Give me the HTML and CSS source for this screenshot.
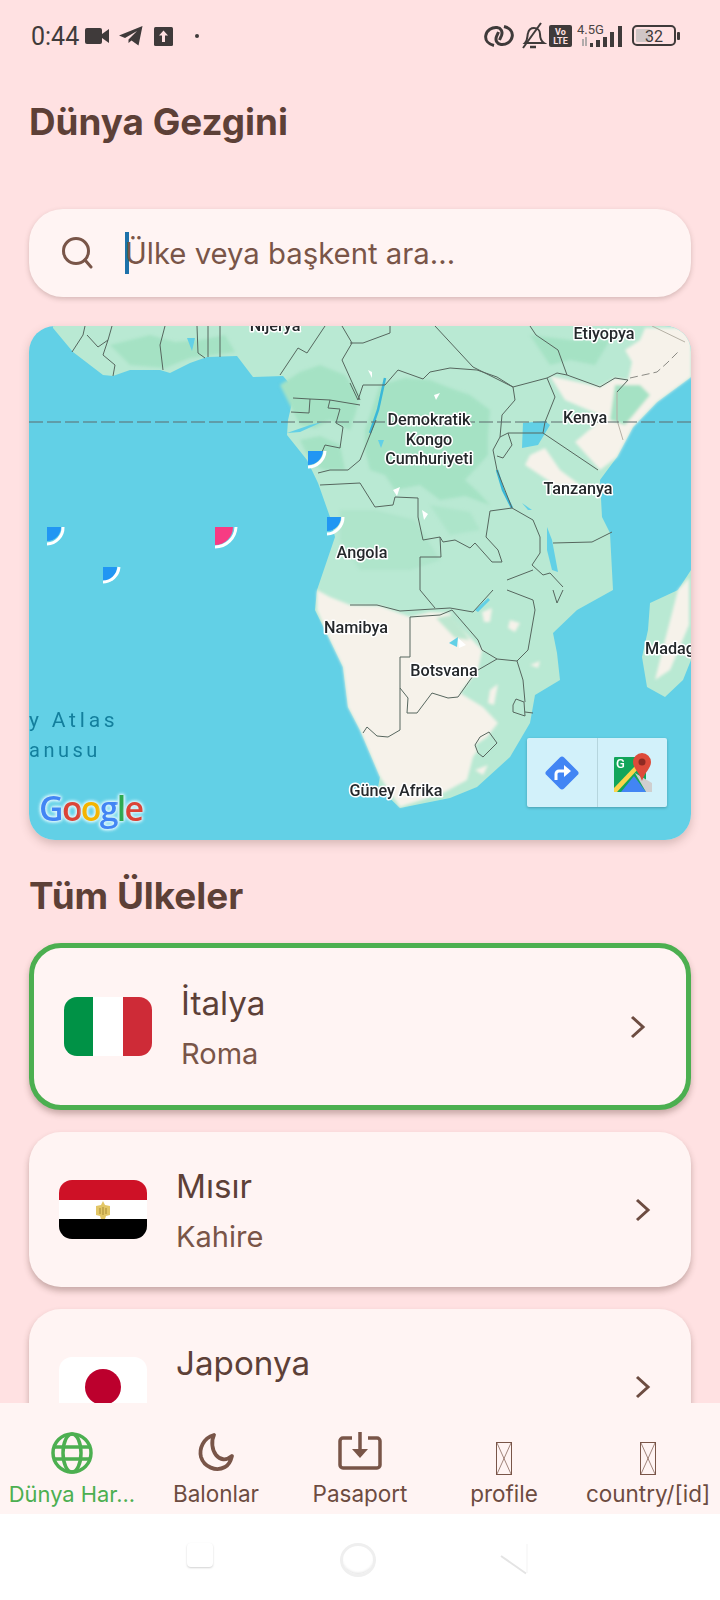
FILE: index.html
```html
<!DOCTYPE html>
<html lang="en">
  <head>
    <meta charset="UTF-8" />
    <meta name="viewport" content="width=device-width, initial-scale=1.0" />
    <title>Dünya Gezgini</title>
    <link rel="stylesheet" href="styles.css">
  </head>
  <body>
    <div class="status-bar">
      <div class="status-left">
        <span class="clock">0:44</span>
        <svg class="ico-video" width="24" height="16" viewBox="0 0 24 16"><rect x="0" y="0" width="17" height="16" rx="2"/><path d="M17 6l7-5v14l-7-5z"/></svg>
        <svg class="ico-send" width="24" height="20" viewBox="0 0 24 20"><path d="M23.5 0L0 9.5l6 2.5L18 5 9.5 13.5V17l3-2.5 7 5z"/></svg>
        <svg class="ico-up" width="19" height="19" viewBox="0 0 19 19"><rect width="19" height="19" rx="1.5"/><path d="M9.5 3.5l4.5 5h-3v6.500h-3v-6.500h-3z" fill="#ffe1e2"/></svg>
        <span class="status-dot"></span>
      </div>
      <div class="status-right">
        <svg class="ico-link" width="30" height="24" viewBox="0 0 30 24" fill="none" stroke="#3f3a3a" stroke-width="3"><path d="M10 21.500C4 20 1 16 1.800 11.500 2.800 6 8 3 13 3.500c4 .5 6 4 4.500 8l-2 4.500"/><path d="M20 2.500c6 1.500 9 5.500 8.200 10C27.200 18 22 21 17 20.500c-4-.5-6-4-4.500-8l2-4.500"/></svg>
        <svg class="ico-bell" width="28" height="28" viewBox="0 0 28 28" fill="none" stroke="#3f3a3a" stroke-width="2"><path d="M6 21c3-3 2-7 3-10 1-4 4-5 6-5 3 0 6 2 6 6 0 4 1 7 4 9z"/><path d="M4 26L22 1"/><path d="M11 25h6" stroke-width="2.500"/></svg>
        <svg class="ico-volte" width="23" height="22" viewBox="0 0 23 22"><rect width="23" height="22" rx="2"/><text x="11.500" y="10" class="volte-txt">Vo</text><text x="11.500" y="19" class="volte-txt">LTE</text></svg>
        <svg class="ico-signal" width="48" height="26" viewBox="0 0 48 26">
          <text x="0" y="11" class="net-txt">4.5G</text>
          <path d="M6 16v7M9 14v9" stroke="#999" stroke-width="1.500"/>
          <rect x="13" y="20" width="3" height="4"/><rect x="19" y="17" width="4" height="7"/><rect x="26" y="14" width="4" height="10"/><rect x="33" y="9" width="4" height="15"/><rect x="41" y="3" width="4" height="21"/>
        </svg>
        <svg class="ico-batt" width="48" height="22" viewBox="0 0 48 22"><rect x="1" y="1" width="42" height="19" rx="4" fill="none" stroke="#3f3a3a" stroke-width="2"/><rect x="4" y="4" width="14" height="13" rx="1" fill="#cfc6c6"/><rect x="45" y="7" width="3" height="8" rx="1"/><text x="13" y="16.500" class="batt-txt">32</text></svg>
      </div>
    </div>

    <main class="content">
      <h1 class="title">Dünya Gezgini</h1>

      <div class="search">
        <svg class="search-icon" width="34" height="32" viewBox="0 0 34 32" fill="none" stroke="#795548" stroke-width="3"><circle cx="16" cy="14" r="12.500"/><path d="M25 23l6 7" stroke-linecap="round"/></svg>
        <span class="caret"></span>
        <span class="search-text">Ülke veya başkent ara...</span>
      </div>

      <div class="map">
        <svg class="map-svg" width="662" height="514" viewBox="29 326 662 514">
          <defs>
            <filter id="soft" x="-5%" y="-5%" width="110%" height="110%"><feGaussianBlur stdDeviation="1.600"/></filter>
          </defs>
          <rect x="29" y="326" width="662" height="514" fill="#62d0e6"/>
          <!-- land -->
          <polygon class="land" points="53,326 53,328 73,352 103,375 113,376 130,370 160,370 170,373 190,363 207,357 237,356 253,377 283,376 295,390 288,420 287,435 307,460 318,483 330,517 335,537 317,590 315,610 330,640 343,667 348,707 360,730 380,777 378,787 400,808 450,798 477,787 510,757 530,723 535,695 560,680 557,653 553,633 577,610 613,590 610,533 602,517 600,480 617,457 633,427 657,402 691,377 691,326"/>
          <polygon class="land" points="691,570 678,590 650,603 648,630 642,657 647,687 665,697 683,680 691,660"/>
          <g filter="url(#soft)">
            <!-- forest patches -->
            <polygon class="forest" points="280,385 300,372 320,365 345,375 352,385 360,395 356,412 350,430 330,420 315,428 300,425"/>
            <polygon class="forest" points="380,385 405,378 430,380 450,388 470,395 490,410 488,435 488,455 465,480 478,492 490,505 465,496 440,500 420,485 395,490 385,475 370,470 365,450 365,430"/>
            <polygon class="forest" points="110,345 130,340 150,335 175,342 200,340 225,335 235,352 190,358 165,368 130,365"/>
            <polygon class="forest" points="300,440 320,436 340,445 345,470 325,470 312,465"/>
            <polygon class="forest" points="530,335 570,340 610,340 595,365 570,360 550,365"/>
            <polygon class="forest" opacity="0.5" points="340,510 375,510 415,520 440,560 410,570 360,570 340,540"/>
            <polygon class="forest" opacity="0.6" points="430,505 470,512 480,530 450,535"/>
            <!-- dry land -->
            <polygon class="dry" points="317,590 330,597 350,605 380,606 410,617 430,612 450,613 463,630 482,650 478,670 460,693 483,707 498,723 490,733 473,757 467,780 443,793 400,807 380,777 360,730 348,707 343,667 330,640 317,610"/>
            <polygon class="dry" points="550,376 600,387 615,378 628,380 632,362 625,350 640,340 645,328 691,328 691,377 657,402 633,427 617,457 600,470 575,442 595,425 600,415 565,400"/>
            <polygon class="dry" points="530,455 545,448 560,470 580,485 555,485 525,465"/>
            <polygon class="dry" points="678,590 689,578 689,625 670,670 655,680 665,640"/>
            <polygon class="forest" points="615,385 640,385 650,395 625,425 610,420"/>
            <polygon class="forest" opacity="0.7" points="436,618 452,615 470,640 455,638"/>
            <polygon class="land" points="490,735 497,743 483,757 478,753 475,745"/>
            <polygon class="dry" points="482,612 492,608 490,622 484,622"/>
            <polygon class="dry" points="510,620 520,623 515,632 508,628"/>
            <polygon class="dry" points="490,690 498,684 494,705 488,703"/>
            <polygon class="dry" points="530,665 540,661 538,668"/>
            <polygon class="dry" points="475,770 488,765 483,775"/>
          </g>
          <polygon class="white-bit" points="434,395 440,393 436,400"/>
          <polygon class="white-bit" points="368,370 372,372 372,378"/>
          <polygon class="white-bit" points="393,490 400,487 397,496"/>
          <polygon class="white-bit" points="422,510 428,514 424,520"/>
          <polygon class="white-bit" points="458,638 466,645 459,648"/>
          <!-- water -->
          <polygon class="water" points="523,423 545,421 550,425 538,445 522,448"/>
          <polygon class="water" points="187,338 195,338 192,351"/>
          <polygon class="water" points="547,527 552,540 558,572 552,570 547,550"/>
          <polygon class="water" points="522,503 532,510 528,510"/>
          <polygon class="water" points="378,440 384,440 381,448"/>
          <polygon class="water" points="449,643 458,637 457,647"/>
          <polygon class="water" points="475,610 488,598 490,600 478,612"/>
          <polygon class="water" points="287,433 310,425 322,422 300,432"/>
          <polyline class="river" points="497,470 503,490 512,508"/>
          <polyline class="river" points="385,378 378,410 370,433"/>
          <!-- borders -->
          <g class="borders">
            <polyline points="85,326 83,335 72,352"/>
            <polyline points="87,335 98,347 108,340 103,355 115,365 113,376"/>
            <polyline points="112,326 108,340"/>
            <polyline points="165,326 160,345 163,370"/>
            <polyline points="197,326 198,353 205,358"/>
            <polyline points="208,326 208,357"/>
            <polyline points="220,326 220,357"/>
            <polyline points="325,326 307,353 298,348 280,375"/>
            <polyline points="342,326 352,343 342,360 360,400"/>
            <polyline points="293,398 310,399 330,400 360,405"/>
            <polyline points="310,399 309,413 291,412"/>
            <polyline points="330,400 328,408 340,409 336,423 343,427 340,448 325,445 322,452"/>
            <polyline points="318,473 330,470 348,470 360,460 368,440 372,430 376,420"/>
            <polyline points="320,485 360,483 375,507 393,505 395,497 418,498 418,517 423,540 440,537 443,542 455,540 470,548 475,543 492,562 502,562 498,550 486,537 490,511 512,508"/>
            <polyline points="350,343 363,343 390,333 390,326"/>
            <polyline points="435,326 473,367 513,387"/>
            <polyline points="350,383 358,400 363,385 385,385 398,370 423,379 430,372 450,368 477,370 497,377 513,387 547,378 557,373 567,375 600,387 615,378 628,380 617,392"/>
            <polyline points="513,387 515,400 502,415 500,437 493,450 497,470 512,508 533,520 540,537 540,553 532,565 543,575 550,573 563,587"/>
            <polyline points="547,378 555,397 545,422 543,433 598,470"/>
            <polyline points="508,433 543,433"/>
            <polyline points="500,437 508,433 512,445 503,458 497,456"/>
            <polyline points="440,537 441,557 420,557 420,590 435,608"/>
            <polyline points="553,543 592,542 612,532"/>
            <polyline points="507,580 533,570"/>
            <polyline points="530,326 536,335 558,350 567,375"/>
            <polyline points="350,605 377,605 400,611 450,608 473,612 493,590"/>
            <polyline points="507,590 533,600 535,610 528,650 517,661 497,659 482,650 478,640 452,610 440,615 410,617 410,657 400,657 400,688 408,698 407,713 417,713 432,693 448,698 458,697 470,680 478,670 497,659"/>
            <polyline points="400,688 400,730 388,737 377,736 367,727 363,733"/>
            <polyline points="517,661 523,680 525,702"/>
            <polygon points="513,705 516,699 524,702 525,716 513,712"/>
            <polyline points="525,712 533,713"/>
            <polygon points="475,745 478,753 483,757 497,743 489,732 480,737"/>
            <polyline points="553,590 557,603 563,590"/>
            <polyline class="thin" points="617,392 617,420 623,440"/>
            <polyline class="thin" points="652,326 685,342"/>
          </g>
          <polyline class="dash-border" points="630,378 657,372 667,363 680,350"/>
          <line class="equator" x1="29" y1="422" x2="691" y2="422"/>
          <!-- markers -->
          <g>
            <path class="m-fill" d="M47 527h14a14 14 0 0 1-14 14z"/><path class="m-arc" d="M63 527a16.500 16.500 0 0 1-16 17"/>
          </g>
          <g>
            <path class="m-fill" d="M103 567h14a14 14 0 0 1-14 14z"/><path class="m-arc" d="M119 567a16.500 16.500 0 0 1-16 15"/>
          </g>
          <g>
            <path class="m-fill" d="M308 451h15a15 15 0 0 1-15 14z"/><path class="m-arc" d="M325 451a17 17 0 0 1-17 16"/>
          </g>
          <g>
            <path class="m-fill" d="M327 517h14a14 14 0 0 1-14 14z"/><path class="m-arc" d="M343 517a17 17 0 0 1-16 17"/>
          </g>
          <path class="m-pink" d="M215 527h18a18 18 0 0 1-18 18z"/><path class="m-arc" d="M236 527a21 21 0 0 1-21 20"/>
          <!-- labels -->
          <g class="labels">
            <text x="275" y="331">Nijerya</text>
            <text x="604" y="339">Etiyopya</text>
            <text x="429" y="425">Demokratik</text>
            <text x="429" y="445">Kongo</text>
            <text x="429" y="464">Cumhuriyeti</text>
            <text x="585" y="423">Kenya</text>
            <text x="578" y="494">Tanzanya</text>
            <text x="362" y="558">Angola</text>
            <text x="356" y="633">Namibya</text>
            <text x="444" y="676">Botsvana</text>
            <text x="396" y="796">Güney Afrika</text>
            <text x="645" y="654" class="start">Madag</text>
          </g>
          <text x="29" y="727" class="sea sea-big">y Atlas</text>
          <text x="29" y="757" class="sea">anusu</text>
        </svg>
        <div class="google"><span class="g-b">G</span><span class="g-r">o</span><span class="g-y">o</span><span class="g-b">g</span><span class="g-g">l</span><span class="g-r">e</span></div>
        <div class="map-btns">
          <div class="map-btn">
            <svg width="36" height="36" viewBox="0 0 36 36"><rect x="5.500" y="5.500" width="25" height="25" rx="3" transform="rotate(45 18 18)" fill="#4285f4"/><path d="M12 25v-6a3 3 0 0 1 3-3h6" fill="none" stroke="#fff" stroke-width="3"/><path d="M20 10l7 6-7 6z" fill="#fff"/></svg>
          </div>
          <div class="map-btn">
            <svg width="40" height="40" viewBox="0 0 40 40">
              <rect x="1" y="4" width="32" height="35" rx="1" fill="#12a55a"/>
              <path d="M22 20l11 19h6V30z" fill="#cfcfcf"/>
              <path d="M8 39l13-16 12 16z" fill="#4285f4"/>
              <path d="M1 35L23 12l3 3L4 39H1z" fill="#fbd44a"/>
              <path d="M29 0a9 9 0 0 1 9 9c0 6-6 10-9 19-3-9-9-13-9-19a9 9 0 0 1 9-9z" fill="#dd4b3a"/>
              <circle cx="29" cy="9" r="3.500" fill="#8e2a22"/>
              <text x="3" y="15" class="maps-g">G</text>
            </svg>
          </div>
        </div>
      </div>

      <h2 class="section-title">Tüm Ülkeler</h2>

      <div class="country-list">
        <div class="country-card selected">
          <div class="flag flag-row"><span class="it-g"></span><span class="it-w"></span><span class="it-r"></span></div>
          <div class="country-info">
            <div class="country-name">İtalya</div>
            <div class="country-capital">Roma</div>
          </div>
          <svg class="chevron" width="16" height="24" viewBox="0 0 16 24"><path d="M2 2l11 10L2 22"/></svg>
        </div>
        <div class="country-card">
          <div class="flag flag-col">
            <span class="eg-r"></span>
            <span class="eg-w"><svg width="14" height="18" viewBox="0 0 14 18"><path d="M7 0l2 4 5 1v9l-4 1-1 3H5l-1-3-4-1V5l5-1z" fill="#e2c666"/><path d="M4 7v6M7 6v8M10 7v6" stroke="#a88a32" stroke-width="1"/></svg></span>
            <span class="eg-b"></span>
          </div>
          <div class="country-info">
            <div class="country-name">Mısır</div>
            <div class="country-capital">Kahire</div>
          </div>
          <svg class="chevron" width="16" height="24" viewBox="0 0 16 24"><path d="M2 2l11 10L2 22"/></svg>
        </div>
        <div class="country-card">
          <div class="flag flag-jp"><span class="jp-dot"></span></div>
          <div class="country-info">
            <div class="country-name">Japonya</div>
            <div class="country-capital">Tokyo</div>
          </div>
          <svg class="chevron" width="16" height="24" viewBox="0 0 16 24"><path d="M2 2l11 10L2 22"/></svg>
        </div>
      </div>
    </main>

    <nav class="tab-bar">
      <div class="tab active">
        <svg class="tab-icon" width="44" height="44" viewBox="0 0 44 44" fill="none" stroke="#4caf50" stroke-width="3.500"><circle cx="22" cy="22" r="19"/><ellipse cx="22" cy="22" rx="9" ry="19"/><path d="M4 16h36M4 28h36"/></svg>
        <span class="tab-label">Dünya Har...</span>
      </div>
      <div class="tab">
        <svg class="tab-icon" width="44" height="44" viewBox="0 0 44 44" fill="none" stroke="#795548" stroke-width="3.800" stroke-linejoin="round"><path d="M20 4C9 7 5 18 7 26c3 10 15 15 24 10 4-2 6-7 7-11-6 5-12 4-16-1S17 10 20 4z"/></svg>
        <span class="tab-label">Balonlar</span>
      </div>
      <div class="tab">
        <svg class="tab-icon" width="44" height="44" viewBox="0 0 44 44" fill="none" stroke="#795548" stroke-width="3.500" stroke-linejoin="round"><path d="M14 7H5a3 3 0 0 0-3 3v24a3 3 0 0 0 3 3h34a3 3 0 0 0 3-3V10a3 3 0 0 0-3-3h-9"/><path d="M22 1v24"/><path d="M22 27l-8-9h16z" fill="#795548" stroke="none"/></svg>
        <span class="tab-label">Pasaport</span>
      </div>
      <div class="tab">
        <svg class="tab-icon missing" width="16" height="33" viewBox="0 0 16 33" fill="none" stroke="#795548" stroke-width="1"><rect x="0.500" y="0.500" width="15" height="32"/><path d="M1 1l14 31M15 1L1 32" stroke-width="0.700"/></svg>
        <span class="tab-label">profile</span>
      </div>
      <div class="tab">
        <svg class="tab-icon missing" width="16" height="33" viewBox="0 0 16 33" fill="none" stroke="#795548" stroke-width="1"><rect x="0.500" y="0.500" width="15" height="32"/><path d="M1 1l14 31M15 1L1 32" stroke-width="0.700"/></svg>
        <span class="tab-label">country/[id]</span>
      </div>
    </nav>

    <div class="nav-bar">
      <span class="nav-square"></span>
      <span class="nav-circle"></span>
      <svg class="nav-back" width="30" height="34" viewBox="0 0 30 34"><path d="M1 15L27 32V1" fill="#fff"/><path d="M1 15l25 17.500" fill="none" stroke="#e4e4e4" stroke-width="2"/><path d="M27 32V3" fill="none" stroke="#f3f3f3" stroke-width="1"/></svg>
    </div>
  </body>
</html>
```

FILE: styles.css
```css
* {
  box-sizing: border-box;
  margin: 0;
  padding: 0;
}
body {
  width: 720px;
  height: 1600px;
  display: flex;
  flex-direction: column;
  overflow: hidden;
  background-color: #ffe1e2;
  font-family: Inter, "Noto Sans", sans-serif;
  color: #5d4037;
}

/* status bar */
.status-bar {
  height: 72px;
  flex-shrink: 0;
  display: flex;
  justify-content: space-between;
  align-items: center;
  padding: 0 40px 0 31px;
  fill: #3f3a3a;
}
.status-left,
.status-right {
  display: flex;
  align-items: center;
}
.clock {
  font-family: Roboto, sans-serif;
  font-size: 25px;
  color: #403b3b;
  width: 54px;
}
.ico-send {
  margin-left: 10px;
}
.ico-up {
  margin-left: 11px;
}
.status-dot {
  width: 4px;
  height: 4px;
  margin-left: 22px;
  border-radius: 50%;
  background-color: #3f3a3a;
}
.ico-bell {
  margin-left: 5px;
}
.ico-volte {
  margin-left: 2px;
  fill: #3f3a3a;
}
.volte-txt {
  font-family: Roboto, sans-serif;
  font-size: 9px;
  font-weight: 700;
  text-anchor: middle;
  fill: #ffe1e2;
}
.ico-signal {
  margin-left: 5px;
}
.net-txt {
  font-family: Roboto, sans-serif;
  font-size: 13px;
  fill: #4a4444;
}
.ico-batt {
  margin-left: 7px;
}
.batt-txt {
  font-family: Roboto, sans-serif;
  font-size: 16px;
  fill: #3f3a3a;
}

/* page content */
.content {
  flex: 1;
  min-height: 0;
  overflow: hidden;
  padding: 28px 29px 0;
}
.title {
  font-size: 36.800px;
  line-height: 44px;
  font-weight: 700;
  color: #5d4037;
}
.search {
  height: 88px;
  margin-top: 65px;
  display: flex;
  align-items: center;
  padding-left: 31px;
  background-color: #fff4f3;
  border-radius: 34px;
  box-shadow: 0 2px 5px rgba(93, 64, 55, 0.25);
}
.search-icon {
  flex-shrink: 0;
}
.caret {
  width: 4px;
  height: 42px;
  margin-left: 31px;
  background-color: #1d72aa;
}
.search-text {
  font-size: 29.300px;
  color: #795548;
  margin-left: -4px;
}

/* map */
.map {
  position: relative;
  height: 514px;
  margin-top: 29px;
  border-radius: 26px;
  overflow: hidden;
  box-shadow: 0 4px 10px rgba(93, 64, 55, 0.25);
}
.map-svg {
  display: block;
}
.land {
  fill: #b9e9d3;
}
.forest {
  fill: #a5e2c4;
}
.dry {
  fill: #f6f2ea;
}
.white-bit {
  fill: #ffffff;
}
.water {
  fill: #62d0e6;
}
.river {
  fill: none;
  stroke: #3ab8d8;
  stroke-width: 2.500;
}
.borders {
  fill: none;
  stroke: #56665e;
  stroke-width: 1;
}
.borders .thin {
  stroke: #b5b0a5;
}
.dash-border {
  fill: none;
  stroke: #8a8a84;
  stroke-width: 1;
  stroke-dasharray: 8 4;
}
.equator {
  stroke: #5d6a6c;
  stroke-width: 1;
  stroke-dasharray: 14 4;
}
.m-fill {
  fill: #2196f3;
}
.m-pink {
  fill: #f73b83;
}
.m-arc {
  fill: none;
  stroke: #ffffff;
  stroke-width: 3;
}
.labels text {
  font-family: Roboto, sans-serif;
  font-size: 16.200px;
  font-weight: 500;
  text-anchor: middle;
  fill: #24282b;
  stroke: #ffffff;
  stroke-width: 3px;
  stroke-linejoin: round;
  paint-order: stroke;
}
.labels .start {
  text-anchor: start;
}
.sea {
  font-family: Roboto, sans-serif;
  font-size: 20px;
  letter-spacing: 3.500px;
  fill: #137f9d;
}
.sea-big {
  font-size: 21px;
  letter-spacing: 3.800px;
}
.google {
  position: absolute;
  left: 10px;
  bottom: 10px;
  font-family: "Open Sans", sans-serif;
  font-size: 34px;
  line-height: 44px;
  font-weight: 600;
  letter-spacing: -1.800px;
  text-shadow: 0 0 2px #d6f3fa, 0 0 3px #d6f3fa, 0 0 3px #d6f3fa, 0 0 4px #d6f3fa, 0 0 4px #d6f3fa;
}
.g-b {
  color: #4285f4;
}
.g-r {
  color: #db4437;
}
.g-y {
  color: #f4b400;
}
.g-g {
  color: #2da94f;
}
.map-btns {
  position: absolute;
  left: 498px;
  top: 412px;
  display: flex;
  background-color: #d2f1fa;
  border-radius: 2px;
  box-shadow: 0 1px 3px rgba(0, 0, 0, 0.25);
}
.map-btn {
  width: 70px;
  height: 69px;
  display: flex;
  align-items: center;
  justify-content: center;
}
.map-btn + .map-btn {
  border-left: 1px solid #b6d6de;
}
.maps-g {
  font-family: Roboto, sans-serif;
  font-size: 13px;
  font-weight: 500;
  fill: #fff;
}

/* country list */
.section-title {
  margin-top: 34px;
  font-size: 36.800px;
  line-height: 44px;
  font-weight: 700;
  color: #5d4037;
}
.country-list {
  margin-top: 25px;
  display: flex;
  flex-direction: column;
  gap: 22px;
}
.country-card {
  display: flex;
  align-items: center;
  padding: 31px 40px 31px 30px;
  background-color: #fff4f3;
  border-radius: 32px;
  box-shadow: 0 4px 6px rgba(80, 50, 40, 0.32);
}
.country-card.selected {
  border: 5px solid #4caf50;
  padding: 32px 40px 32px 30px;
}
.flag {
  width: 88px;
  height: 59px;
  flex-shrink: 0;
  border-radius: 13px;
  overflow: hidden;
}
.flag-row {
  display: flex;
}
.flag-row span {
  flex: 1;
}
.it-g {
  background-color: #009246;
}
.it-w {
  background-color: #ffffff;
}
.it-r {
  background-color: #ce2b37;
}
.flag-col {
  display: flex;
  flex-direction: column;
}
.flag-col span {
  flex: 1;
  display: flex;
  align-items: center;
  justify-content: center;
}
.eg-r {
  background-color: #ce1126;
}
.eg-w {
  background-color: #ffffff;
}
.eg-b {
  background-color: #000000;
}
.flag-jp {
  display: flex;
  align-items: center;
  justify-content: center;
  background-color: #ffffff;
}
.jp-dot {
  width: 36px;
  height: 36px;
  border-radius: 50%;
  background-color: #bc002d;
}
.country-info {
  flex: 1;
  margin-left: 29px;
  padding-top: 2px;
}
.country-name {
  font-size: 33.200px;
  line-height: 42px;
  color: #5d4037;
}
.country-capital {
  margin-top: 10px;
  font-size: 29px;
  line-height: 39px;
  color: #795548;
}
.chevron {
  flex-shrink: 0;
  fill: none;
  stroke: #6d4c41;
  stroke-width: 3;
}

/* bottom tabs */
.tab-bar {
  height: 111px;
  flex-shrink: 0;
  display: flex;
  padding-top: 28px;
  background-color: #fff4f3;
}
.tab {
  flex: 1;
  min-width: 0;
  display: flex;
  flex-direction: column;
  align-items: center;
}
.tab-icon {
  height: 44px;
}
.tab-icon.missing {
  height: 33px;
  margin-top: 11px;
}
.tab-label {
  margin-top: 6px;
  font-size: 22.500px;
  line-height: 26px;
  color: #6d4c41;
  white-space: nowrap;
}
.tab.active .tab-label {
  font-size: 21.900px;
  color: #4caf50;
}

/* system nav */
.nav-bar {
  height: 86px;
  flex-shrink: 0;
  background-color: #ffffff;
  display: flex;
  align-items: center;
  padding: 0 0 4px 187px;
}
.nav-square {
  width: 26px;
  height: 24px;
  border-radius: 4px;
  background-color: #ffffff;
  box-shadow: 0 1px 2px rgba(0, 0, 0, 0.18);
}
.nav-circle {
  width: 36px;
  height: 34px;
  margin: 10px 0 0 127px;
  border-radius: 50%;
  background-color: #ffffff;
  border: 3px solid #efefef;
  box-shadow: inset 0 -3px 3px -2px rgba(0, 0, 0, 0.12);
}
.nav-back {
  margin: 6px 0 0 124px;
}
```
